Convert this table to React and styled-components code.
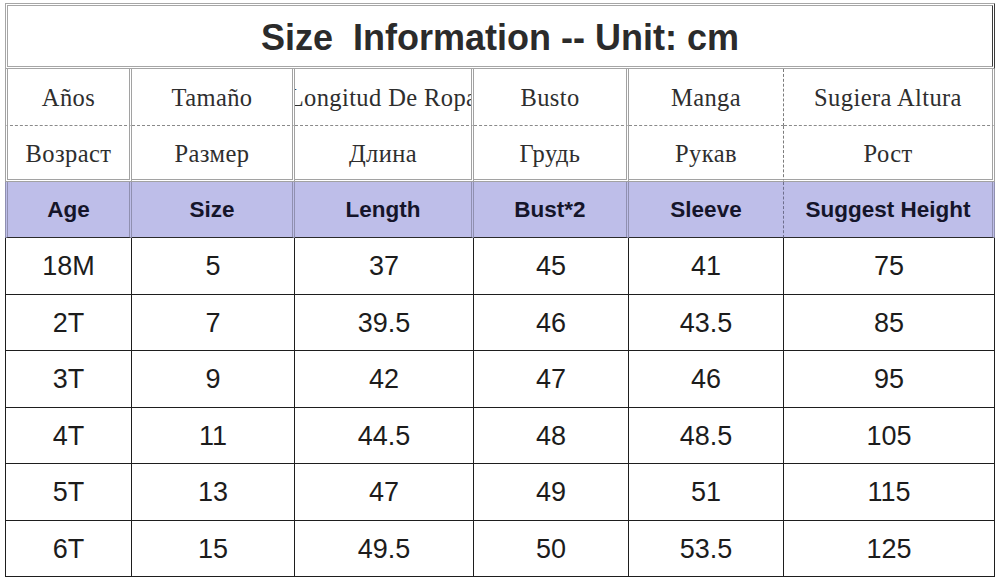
import React from "react";
import styled, { createGlobalStyle } from "styled-components";

const GlobalStyle = createGlobalStyle`
  html, body {
    margin: 0;
    background: #fff;
  }
  body {
    padding: 3px 5px 0;
    font-family: "Liberation Sans", Arial, sans-serif;
  }
`;

const COLUMNS = "127px 163px 179px 155px 155px 211px";

const borders = {
  es: {
    side: "3px double #a2a2a2",
    bottom: "1px dashed #8a8a8a",
    dashed: "1px dashed #7c7c7c",
  },
  ru: {
    side: "3px double #a2a2a2",
    bottom: "3px double #a2a2a2",
    dashed: "1px dashed #7c7c7c",
  },
  head: {
    side: "3px double #9090b0",
    bottom: "1px solid #2a2a2a",
    dashed: "1px dashed #6e6e8c",
  },
  data: {
    side: "1px solid #1e1e1e",
    bottom: "1px solid #1e1e1e",
    dashed: "1px solid #1e1e1e",
  },
};

const Chart = styled.div`
  width: 990px;
  display: flex;
  flex-direction: column;
`;

const Title = styled.div`
  height: 66px;
  box-sizing: border-box;
  padding-top: 3px;
  border: 3px double #a6a6a6;
  border-right-color: #3a3a3a;
  display: flex;
  align-items: center;
  justify-content: center;
  font-size: 36px;
  font-weight: bold;
  color: #2b2b2b;
  white-space: pre;
`;

const Row = styled.div`
  display: grid;
  grid-template-columns: ${COLUMNS};
  height: ${({ $height }) => $height}px;
  background: ${({ $kind }) => ($kind === "head" ? "#bebee9" : "#fff")};
`;

const Cell = styled.div`
  box-sizing: border-box;
  display: flex;
  align-items: center;
  justify-content: center;
  overflow: hidden;
  white-space: nowrap;
  border-right: ${({ $kind, $dashed }) =>
    $dashed ? borders[$kind].dashed : borders[$kind].side};
  border-bottom: ${({ $kind }) => borders[$kind].bottom};

  &:first-child {
    border-left: ${({ $kind }) => borders[$kind].side};
  }
`;

const SerifText = styled.span`
  font-family: "Liberation Serif", "Times New Roman", serif;
  font-size: 24.5px;
  letter-spacing: 0.4px;
  color: #2e2e2e;
  padding-top: 2px;
`;

const HeadText = styled.span`
  font-size: 22.5px;
  font-weight: bold;
  color: #15152a;
`;

const DataText = styled.span`
  font-size: 27px;
  color: #1c1c1c;
  padding-top: 2px;
`;

const spanish = ["Años", "Tamaño", "Longitud De Ropa", "Busto", "Manga", "Sugiera Altura"];
const russian = ["Возраст", "Размер", "Длина", "Грудь", "Рукав", "Рост"];
const english = ["Age", "Size", "Length", "Bust*2", "Sleeve", "Suggest Height"];

const rows = [
  ["18M", "5", "37", "45", "41", "75"],
  ["2T", "7", "39.5", "46", "43.5", "85"],
  ["3T", "9", "42", "47", "46", "95"],
  ["4T", "11", "44.5", "48", "48.5", "105"],
  ["5T", "13", "47", "49", "51", "115"],
  ["6T", "15", "49.5", "50", "53.5", "125"],
];

const App = () => {
  return (
    <>
      <GlobalStyle />
      <Chart>
        <Title>{"Size  Information -- Unit: cm"}</Title>

        <Row $kind="es" $height={57}>
          {spanish.map((label, i) => (
            <Cell key={label} $kind="es" $dashed={i === 4}>
              <SerifText>{label}</SerifText>
            </Cell>
          ))}
        </Row>

        <Row $kind="ru" $height={56}>
          {russian.map((label, i) => (
            <Cell key={label} $kind="ru" $dashed={i === 4}>
              <SerifText>{label}</SerifText>
            </Cell>
          ))}
        </Row>

        <Row $kind="head" $height={56}>
          {english.map((label, i) => (
            <Cell key={label} $kind="head" $dashed={i === 4}>
              <HeadText>{label}</HeadText>
            </Cell>
          ))}
        </Row>

        {rows.map((row, r) => (
          <Row key={r} $kind="data" $height={56.5}>
            {row.map((value, i) => (
              <Cell key={i} $kind="data">
                <DataText>{value}</DataText>
              </Cell>
            ))}
          </Row>
        ))}
      </Chart>
    </>
  );
};

export default App;
